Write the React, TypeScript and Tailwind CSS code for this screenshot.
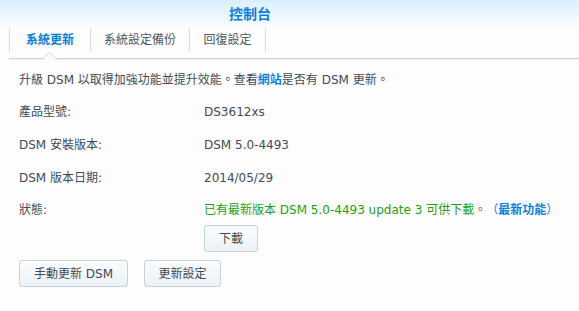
const FONT = "font-[family-name:'DejaVu_Sans','Noto_Sans_CJK_TC',sans-serif]";

const TABS = [
  { label: "系統更新", width: "w-[81px]", active: true },
  { label: "系統設定備份", width: "w-[99px]", active: false },
  { label: "回復設定", width: "w-[77px]", active: false },
];

const INFO = [
  { label: "產品型號:", value: "DS3612xs" },
  { label: "DSM 安裝版本:", value: "DSM 5.0-4493" },
  { label: "DSM 版本日期:", value: "2014/05/29" },
];

function Button({ children, width }: { children: React.ReactNode; width: string }) {
  return (
    <button
      className={`${width} h-[27px] rounded-[3px] border border-[#c7d2dd] bg-gradient-to-b from-[#fafcfd] to-[#edf2f7] text-[12px] text-[#404a54]`}
    >
      {children}
    </button>
  );
}

export default function App() {
  return (
    <div
      className={`${FONT} h-[311px] w-[579px] overflow-hidden bg-[#fdfdfd] text-[12px] text-[#414b56] [text-spacing-trim:space-all]`}
    >
      {/* title bar */}
      <div className="flex h-[28px] items-center bg-gradient-to-b from-[#d9effd] to-[#fdfdfd] pl-[229px]">
        <span className="text-[14px] font-bold text-[#0a7fd9]">控制台</span>
      </div>

      {/* tabs */}
      <div className="relative ml-[9px] flex h-[31px] border-b border-[#d3d6d9] shadow-[0_1px_0_#eeeeee]">
        {TABS.map((tab, i) => (
          <div
            key={tab.label}
            className={`${tab.width} flex h-[24px] items-center justify-center border-l border-[#d5dde5] ${
              i === TABS.length - 1 ? "border-r" : ""
            } ${tab.active ? "font-bold text-[#0a7fd9]" : "text-[#4e5862]"}`}
          >
            {tab.label}
          </div>
        ))}
        {/* caret under the active tab */}
        <svg className="absolute left-[33px] top-[24px]" width="15" height="8" viewBox="0 0 15 8">
          <polygon points="0,7.5 7.5,0.5 15,7.5" fill="#fdfdfd" />
          <polyline points="0,7.5 7.5,0.5 15,7.5" fill="none" stroke="#d3d6d9" />
        </svg>
      </div>

      {/* content */}
      <div className="pl-[19px] pt-[5px]">
        <div className="flex h-[31px] items-center">
          升級 DSM 以取得加強功能並提升效能。查看<span className="font-bold text-[#0a7fd9]">網站</span>是否有 DSM 更新。
        </div>

        {INFO.map((row) => (
          <div key={row.label} className="flex h-[33px] items-center">
            <span className="w-[185px]">{row.label}</span>
            <span>{row.value}</span>
          </div>
        ))}

        <div className="flex h-[31px] items-center">
          <span className="w-[185px]">狀態:</span>
          <span className="whitespace-nowrap text-[#1d9f12]">
            已有最新版本 DSM 5.0-4493 update 3 可供下載。
            <span className="text-[#0a7fd9]">
              （<span className="font-bold">最新功能</span>）
            </span>
          </span>
        </div>

        <div className="pl-[185px]">
          <Button width="w-[54px]">下載</Button>
        </div>

        <div className="mt-[8px] flex gap-[16px]">
          <Button width="w-[109px]">手動更新 DSM</Button>
          <Button width="w-[77px]">更新設定</Button>
        </div>
      </div>
    </div>
  );
}
